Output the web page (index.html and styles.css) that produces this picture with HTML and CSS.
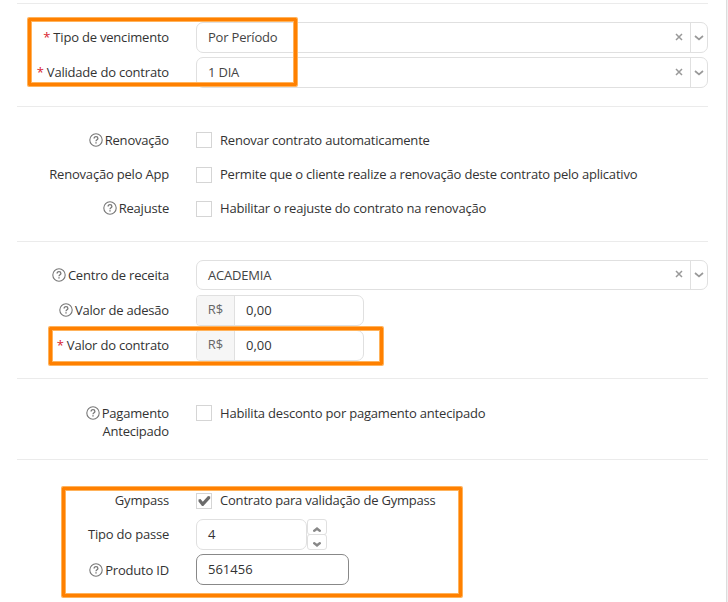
FILE: index.html
```html
<!DOCTYPE html>
<html lang="pt-BR">
<head>
    <meta charset="UTF-8">
    <meta name="viewport" content="width=device-width, initial-scale=1.0">
    <title>Contrato</title>
    <link rel="stylesheet" href="styles.css">
</head>
<body>
    <svg class="sprite" width="0" height="0">
        <symbol id="help" viewBox="0 0 14 14">
            <circle cx="7" cy="7" r="6.2" fill="none" stroke="#777" stroke-width="1.1"/>
            <path d="M5.1 5.6C5.1 4.3 5.9 3.7 7 3.7S8.9 4.4 8.9 5.4C8.9 6.7 7 6.7 7 8.2" fill="none" stroke="#777" stroke-width="1.3"/>
            <path d="M6.3 9.2h1.4v1.4H6.3z" fill="#777"/>
        </symbol>
        <symbol id="clear" viewBox="0 0 8 8">
            <path d="M1 1l6 6M7 1L1 7" fill="none" stroke="#999" stroke-width="1.5"/>
        </symbol>
        <symbol id="chevron" viewBox="0 0 10 6">
            <path d="M1 1l4 3.4L9 1" fill="none" stroke="#999" stroke-width="1.7"/>
        </symbol>
        <symbol id="arrow" viewBox="0 0 8 5">
            <path d="M0 .6L1.6 0L4 1.8L6.4 0L8 .6V1.8L4 5L0 1.8z" fill="#888"/>
        </symbol>
    </svg>
    <main class="panel">
        <section class="terms">
            <div class="row">
                <label><b>*</b> Tipo de vencimento</label>
                <div class="select"><span>Por Período</span><svg class="clear"><use href="#clear"/></svg><i><svg class="chevron"><use href="#chevron"/></svg></i></div>
            </div>
            <div class="row">
                <label><b>*</b> Validade do contrato</label>
                <div class="select"><span>1 DIA</span><svg class="clear"><use href="#clear"/></svg><i><svg class="chevron"><use href="#chevron"/></svg></i></div>
            </div>
        </section>
        <section class="checks">
            <div class="row">
                <label><svg class="help"><use href="#help"/></svg>Renovação</label>
                <div class="check"><span class="box"></span>Renovar contrato automaticamente</div>
            </div>
            <div class="row">
                <label>Renovação pelo App</label>
                <div class="check"><span class="box low"></span>Permite que o cliente realize a renovação deste contrato pelo aplicativo</div>
            </div>
            <div class="row">
                <label><svg class="help"><use href="#help"/></svg>Reajuste</label>
                <div class="check"><span class="box low"></span>Habilitar o reajuste do contrato na renovação</div>
            </div>
        </section>
        <section class="values">
            <div class="row">
                <label><svg class="help"><use href="#help"/></svg>Centro de receita</label>
                <div class="select"><span>ACADEMIA</span><svg class="clear"><use href="#clear"/></svg><i><svg class="chevron"><use href="#chevron"/></svg></i></div>
            </div>
            <div class="row">
                <label class="raised"><svg class="help"><use href="#help"/></svg>Valor de adesão</label>
                <div class="money"><span class="prefix">R$</span><span class="amount">0,00</span></div>
            </div>
            <div class="row">
                <label class="raised"><b>*</b> Valor do contrato</label>
                <div class="money"><span class="prefix">R$</span><span class="amount">0,00</span></div>
            </div>
        </section>
        <section class="checks advance">
            <div class="row">
                <label><svg class="help"><use href="#help"/></svg>Pagamento<br>Antecipado</label>
                <div class="check"><span class="box"></span>Habilita desconto por pagamento antecipado</div>
            </div>
        </section>
        <section class="gympass">
            <div class="row check-row">
                <label>Gympass</label>
                <div class="check"><span class="box low"><svg width="14" height="14" viewBox="0 0 14 14"><path d="M1.5 5.5L3.5 5L5.8 7.8L11 2L13.2 2.6V4.4L6.3 12H5L1.5 7.5z" fill="#6b6b6b"/></svg></span>Contrato para validação de Gympass</div>
            </div>
            <div class="row">
                <label class="raised">Tipo do passe</label>
                <div class="stepper">
                    <span class="input">4</span>
                    <span class="buttons">
                        <span><svg class="arrow up"><use href="#arrow"/></svg></span>
                        <span><svg class="arrow"><use href="#arrow"/></svg></span>
                    </span>
                </div>
            </div>
            <div class="row">
                <label><svg class="help"><use href="#help"/></svg>Produto ID</label>
                <div class="input focus">561456</div>
            </div>
        </section>
        <div class="mark mark-validade"></div>
        <div class="mark mark-valor"></div>
        <div class="mark mark-gympass"></div>
    </main>
</body>
</html>
```

FILE: styles.css
```css
* {
    box-sizing: border-box;
}

body {
    margin: 0;
    background-color: #f0f0f0;
    font-family: 'Open Sans', 'Noto Sans', sans-serif;
    font-size: 13px;
    line-height: 18px;
    color: #333;
    overflow: hidden;
}

.sprite {
    position: absolute;
}

.panel {
    position: relative;
    width: 727px;
    height: 602px;
    padding: 3px 18px 0 17px;
    background-color: #fff;
    border-right: 1px solid #ddd;
}

section {
    display: flex;
    flex-direction: column;
    gap: 4px;
    padding: 18px 0;
    border-top: 1px solid #ebebeb;
}

.row {
    display: grid;
    grid-template-columns: 152px 1fr;
    column-gap: 27px;
    align-items: center;
    height: 31px;
}

label {
    text-align: right;
    white-space: nowrap;
}

label,
.check,
.select {
    letter-spacing: -0.2px;
}

label b {
    color: #d9232e;
    font-weight: normal;
}

.raised,
.terms label,
.terms .select span {
    padding-bottom: 2px;
}

.help {
    width: 14px;
    height: 14px;
    margin-right: 2px;
    vertical-align: -2px;
}

.select {
    display: flex;
    align-items: center;
    height: 100%;
    padding-left: 11px;
    border: 1px solid #e0e0e0;
    border-radius: 7px;
    color: #444;
}

.select span {
    flex: 1;
    padding-bottom: 1px;
}

.select i {
    display: flex;
    align-items: center;
    justify-content: center;
    width: 17px;
    height: 100%;
    border-left: 1px solid #e0e0e0;
}

.clear {
    width: 8px;
    height: 8px;
    margin: 0 7px 2px 0;
}

.chevron {
    width: 10px;
    height: 6px;
}

/* checkboxes */
.checks {
    gap: 0;
    padding: 16px 0;
}

.checks .row,
.check-row {
    height: 34px;
}

.check {
    display: flex;
    align-items: center;
    gap: 8px;
}

.box {
    width: 16px;
    height: 16px;
    border: 1px solid #d5d5d5;
}

.low {
    margin-top: 2px;
}

.box svg {
    display: block;
}

/* money fields */
.values {
    gap: 5px;
}

.values .row {
    height: 30px;
}

.money {
    display: flex;
    width: 168px;
    height: 100%;
    border: 1px solid #e0e0e0;
    border-radius: 4px 7px 7px 4px;
    line-height: 29px;
}

.prefix {
    width: 38px;
    background-color: #f6f6f6;
    border-right: 1px solid #e0e0e0;
    border-radius: 3px 0 0 3px;
    color: #666;
    text-align: center;
    line-height: 27px;
}

.amount {
    padding-left: 11px;
}

.advance {
    padding: 25px 0 19px;
}

.advance .row {
    height: 36px;
    align-items: start;
}

/* gympass */
.gympass {
    padding-top: 23px;
}

.check-row {
    margin-bottom: -2px;
}

.input {
    display: block;
    width: 111px;
    height: 31px;
    padding-left: 11px;
    border: 1px solid #e0e0e0;
    border-radius: 7px;
    line-height: 29px;
}

.focus {
    width: 153px;
    border-color: #888;
}

.stepper {
    display: flex;
}

.buttons {
    display: flex;
    flex-direction: column;
    width: 20px;
}

.buttons span {
    display: flex;
    align-items: center;
    justify-content: center;
    height: 16px;
    padding-top: 4px;
    border: 1px solid #e0e0e0;
    border-radius: 3px;
}

.buttons span + span {
    margin-top: -1px;
}

.arrow {
    width: 8px;
    height: 5px;
}

.up {
    transform: rotate(180deg);
}

/* orange highlights over the form */
.mark {
    position: absolute;
    border: 3px solid #ff8000;
    border-radius: 1px;
    box-shadow: 0 0 0 1px #ffb35c, inset 0 0 0 1px #ffb35c;
}

.mark-validade {
    left: 28px;
    top: 18px;
    width: 269px;
    height: 68px;
}

.mark-valor {
    left: 49px;
    top: 327px;
    width: 334px;
    height: 38px;
}

.mark-gympass {
    left: 62px;
    top: 487px;
    width: 400px;
    height: 110px;
}
```
